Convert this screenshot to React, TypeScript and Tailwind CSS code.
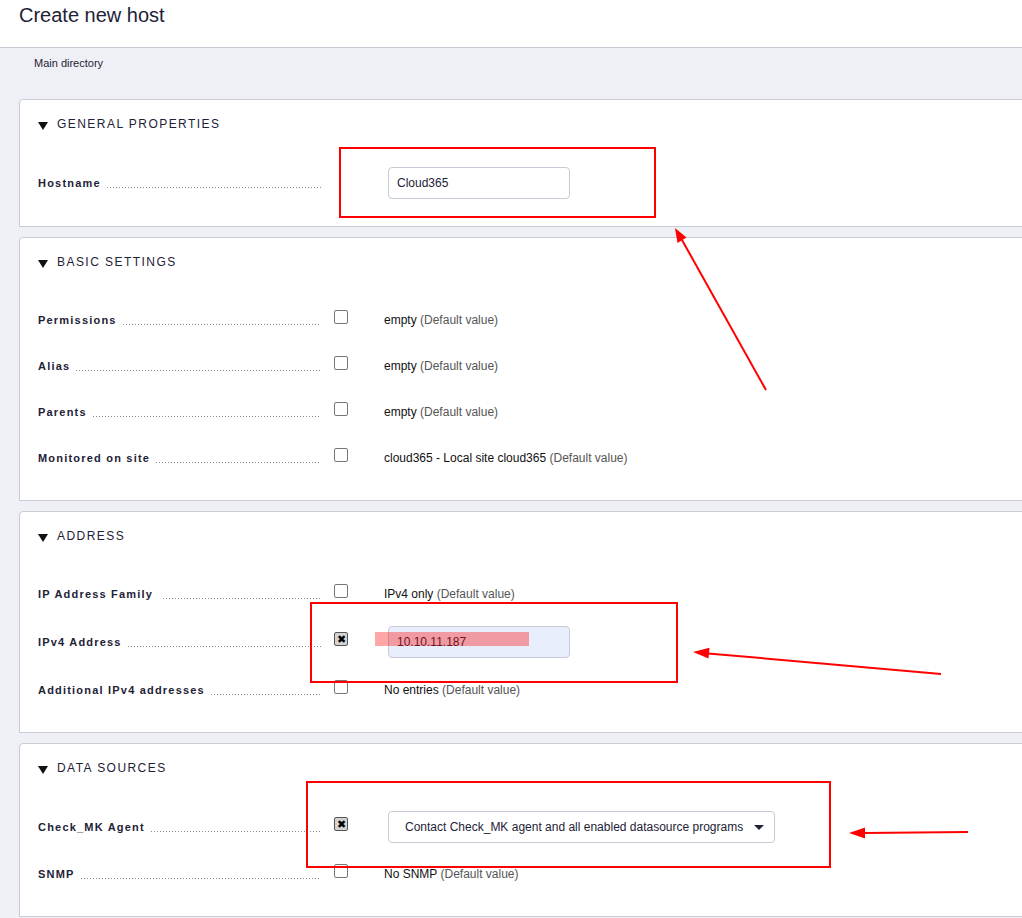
import React from "react";

function Triangle() {
  return (
    <svg width="10" height="9" viewBox="0 0 10 9" className="shrink-0 mt-[2px]">
      <polygon points="0,1 10,1 5,9" fill="#111" />
    </svg>
  );
}

function Checkbox({ checked = false }: { checked?: boolean }) {
  return (
    <div className="w-[62px] shrink-0 pl-[12px] mb-[6px]">
      {checked ? (
        <div className="w-[14px] h-[14px] rounded-[2px] border-[1.5px] border-[#555] bg-[#d4d4d4] flex items-center justify-center text-[11px] leading-none text-black">
          ✖
        </div>
      ) : (
        <div className="w-[14px] h-[14px] rounded-[2px] border-[1.5px] border-[#777] bg-white" />
      )}
    </div>
  );
}

function Label({ text, gap = "ml-[6px]" }: { text: string; gap?: string }) {
  return (
    <div className="w-[284px] shrink-0 flex items-end">
      <span className="text-[11px] leading-[13px] font-bold tracking-[1.2px] text-[#1e2236] whitespace-nowrap">
        {text}
      </span>
      <div
        className={`flex-1 h-[1px] mb-[2px] mr-[1px] ${gap} bg-[linear-gradient(to_right,#868999_1px,transparent_1px)] bg-[length:3px_1px] bg-repeat-x`}
      />
    </div>
  );
}

function DefaultValue({ value }: { value: string }) {
  return (
    <span className="text-[12px] text-[#111] whitespace-nowrap">
      {value} <span className="text-[#555]">(Default value)</span>
    </span>
  );
}

function Row({
  label,
  h = "h-[46px]",
  checkbox = true,
  checked = false,
  gap,
  children,
}: {
  label: string;
  h?: string;
  checkbox?: boolean;
  checked?: boolean;
  gap?: string;
  children: React.ReactNode;
}) {
  return (
    <div className={`flex items-center ${h}`}>
      <Label text={label} gap={gap} />
      {checkbox ? <Checkbox checked={checked} /> : <div className="w-[62px] shrink-0" />}
      <div className="flex items-center">{children}</div>
    </div>
  );
}

function Section({ title, children }: { title: string; children: React.ReactNode }) {
  return (
    <div className="w-[1040px] bg-white border border-[#c8cad6] rounded-tl-[4px] pl-[18px] pt-[16px] pb-[19px]">
      <div className="flex items-center gap-[9px] h-[16px]">
        <Triangle />
        <span className="text-[12px] tracking-[1.45px] text-[#1e2236]">{title}</span>
      </div>
      <div className="mt-[27px]">{children}</div>
    </div>
  );
}

function Annotations() {
  return (
    <svg
      className="absolute top-0 left-0 pointer-events-none"
      width="1022"
      height="918"
      viewBox="0 0 1022 918"
    >
      <rect x="340" y="148" width="315" height="69" fill="none" stroke="#ff0000" strokeWidth="2" />
      <rect x="311" y="603" width="366" height="79" fill="none" stroke="#ff0000" strokeWidth="2" />
      <rect x="307" y="782" width="523" height="85" fill="none" stroke="#ff0000" strokeWidth="2" />
      <rect x="375" y="632" width="154" height="14" fill="#ff0000" fillOpacity="0.35" />

      <line x1="766" y1="390" x2="682" y2="240" stroke="#ff0000" strokeWidth="2" />
      <polygon points="675,228 686.5,237.5 677.5,243" fill="#ff0000" />

      <line x1="941" y1="674" x2="708" y2="653.4" stroke="#ff0000" strokeWidth="2" />
      <polygon points="693,652 709.5,647.8 708.5,658.6" fill="#ff0000" />

      <line x1="968" y1="832" x2="864" y2="833" stroke="#ff0000" strokeWidth="2" />
      <polygon points="849,833 865,827.5 865,838.5" fill="#ff0000" />
    </svg>
  );
}

export default function App() {
  return (
    <div
      className="relative w-[1022px] h-[918px] overflow-hidden bg-[#eff0f5]"
      style={{ fontFamily: '"Liberation Sans", Arial, sans-serif' }}
    >
      <div className="h-[48px] bg-white border-b border-[#c8cad4] pl-[19px] pt-[3px]">
        <h1 className="text-[20px] leading-[24px] text-[#1e2236]">Create new host</h1>
      </div>

      <div className="pt-[8px] pl-[34px] h-[22px] text-[11px] leading-[14px] text-[#1e2236]">
        Main directory
      </div>

      <div className="pl-[19px] pt-[29px] flex flex-col gap-[10px]">
        <Section title="GENERAL PROPERTIES">
          <Row label="Hostname" h="h-[48px]" checkbox={false}>
            <div className="ml-[4px] w-[182px] h-[32px] border border-[#c8cad6] rounded-[4px] bg-white flex items-center pl-[8px] text-[12px] text-[#1e2236]">
              Cloud365
            </div>
          </Row>
        </Section>

        <Section title="BASIC SETTINGS">
          <Row label="Permissions">
            <DefaultValue value="empty" />
          </Row>
          <Row label="Alias">
            <DefaultValue value="empty" />
          </Row>
          <Row label="Parents">
            <DefaultValue value="empty" />
          </Row>
          <Row label="Monitored on site">
            <DefaultValue value="cloud365 - Local site cloud365" />
          </Row>
        </Section>

        <Section title="ADDRESS">
          <Row label="IP Address Family" gap="ml-[10px]">
            <DefaultValue value="IPv4 only" />
          </Row>
          <Row label="IPv4 Address" h="h-[50px]" checked>
            <div className="ml-[4px] w-[182px] h-[32px] border border-[#c8cad6] rounded-[4px] bg-[#e8eefc] flex items-center pl-[8px] text-[12px] text-[#1e2236]">
              10.10.11.187
            </div>
          </Row>
          <Row label="Additional IPv4 addresses">
            <DefaultValue value="No entries" />
          </Row>
        </Section>

        <Section title="DATA SOURCES">
          <Row label="Check_MK Agent" h="h-[48px]" checked>
            <div className="ml-[4px] w-[387px] h-[32px] border border-[#c8cad6] rounded-[4px] bg-white flex items-center pl-[16px] pr-[10px] text-[12px] text-[#1e2236]">
              <span className="flex-1 whitespace-nowrap">
                Contact Check_MK agent and all enabled datasource programs
              </span>
              <svg width="10" height="5" viewBox="0 0 10 5">
                <polygon points="0,0 10,0 5,5" fill="#1e2236" />
              </svg>
            </div>
          </Row>
          <Row label="SNMP">
            <DefaultValue value="No SNMP" />
          </Row>
        </Section>
      </div>

      <Annotations />
    </div>
  );
}
